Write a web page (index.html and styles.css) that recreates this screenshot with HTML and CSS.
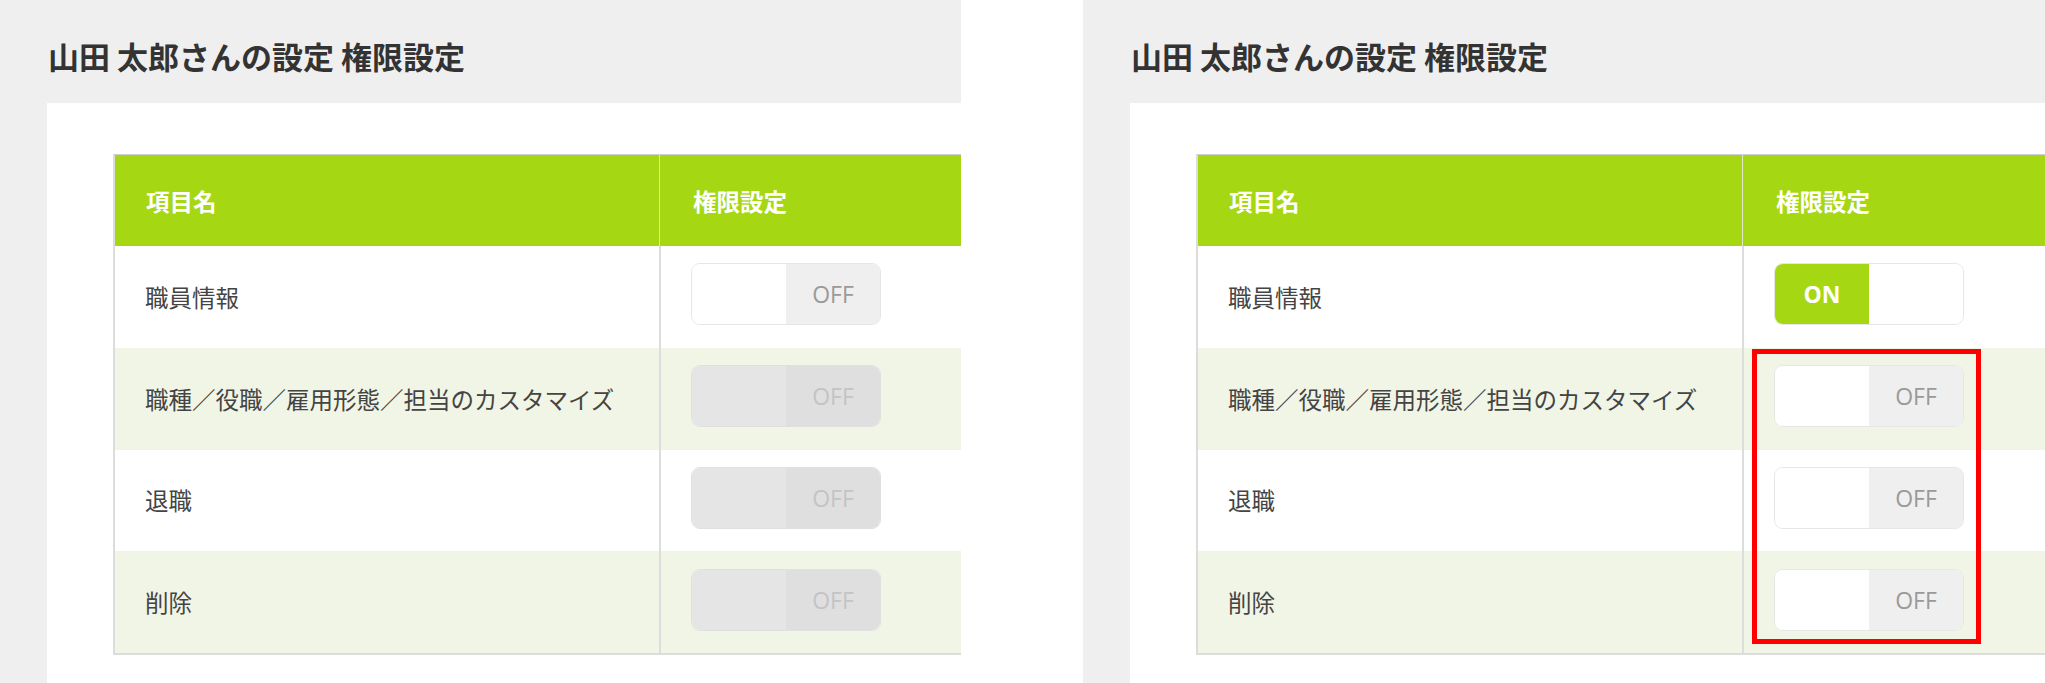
FILE: index.html
```html
<!DOCTYPE html>
<html lang="ja">
<head>
<meta charset="utf-8">
<title>権限設定</title>
<link rel="stylesheet" href="styles.css">
</head>
<body>
<div class="compare">
  <section class="panel">
    <h1 class="title">山田 太郎さんの設定 権限設定</h1>
    <div class="card">
      <div class="table">
        <div class="row head">
          <div class="cell name">項目名</div>
          <div class="cell ctrl">権限設定</div>
        </div>
        <div class="row">
          <div class="cell name">職員情報</div>
          <div class="cell ctrl"><div class="toggle"><span class="half blank"></span><span class="half off">OFF</span></div></div>
        </div>
        <div class="row alt">
          <div class="cell name">職種／役職／雇用形態／担当のカスタマイズ</div>
          <div class="cell ctrl"><div class="toggle disabled"><span class="half blank"></span><span class="half off">OFF</span></div></div>
        </div>
        <div class="row">
          <div class="cell name">退職</div>
          <div class="cell ctrl"><div class="toggle disabled"><span class="half blank"></span><span class="half off">OFF</span></div></div>
        </div>
        <div class="row alt">
          <div class="cell name">削除</div>
          <div class="cell ctrl"><div class="toggle disabled"><span class="half blank"></span><span class="half off">OFF</span></div></div>
        </div>
      </div>
    </div>
  </section>

  <section class="panel panel-right">
    <h1 class="title">山田 太郎さんの設定 権限設定</h1>
    <div class="card">
      <div class="table">
        <div class="row head">
          <div class="cell name">項目名</div>
          <div class="cell ctrl">権限設定</div>
        </div>
        <div class="row">
          <div class="cell name">職員情報</div>
          <div class="cell ctrl"><div class="toggle"><span class="half on">ON</span><span class="half blank"></span></div></div>
        </div>
        <div class="row alt">
          <div class="cell name">職種／役職／雇用形態／担当のカスタマイズ</div>
          <div class="cell ctrl"><div class="toggle"><span class="half blank"></span><span class="half off">OFF</span></div></div>
        </div>
        <div class="row">
          <div class="cell name">退職</div>
          <div class="cell ctrl"><div class="toggle"><span class="half blank"></span><span class="half off">OFF</span></div></div>
        </div>
        <div class="row alt">
          <div class="cell name">削除</div>
          <div class="cell ctrl"><div class="toggle"><span class="half blank"></span><span class="half off">OFF</span></div></div>
        </div>
      </div>
    </div>
    <div class="highlight"></div>
  </section>
</div>
</body>
</html>
```

FILE: styles.css
```css
* { box-sizing: border-box; }

html, body {
  margin: 0;
  padding: 0;
  background: #ffffff;
}

body {
  font-family: "Noto Sans CJK JP", "Noto Sans", sans-serif;
  color: #444444;
}

.compare {
  display: flex;
  gap: 122px;
  width: 2045px;
  height: 683px;
  overflow: hidden;
}

.panel {
  position: relative;
  flex: 0 0 961px;
  height: 683px;
  overflow: hidden;
  background: #efefef;
  padding: 40px 0 0 47px;
}

.panel-right {
  flex-basis: 962px;
}

.title {
  margin: 0 0 32px 1px;
  font-size: 31px;
  line-height: 31px;
  font-weight: 700;
  color: #333333;
  white-space: nowrap;
}

.card {
  background: #ffffff;
  height: 620px;
  padding: 51px 0 0 66px;
}

.table {
  width: 1100px;
  border-left: 2px solid #dcdcdc;
  border-top: 1px solid #cfcfcf;
  border-bottom: 2px solid #dcdcdc;
}

.row {
  display: grid;
  grid-template-columns: 544px 1fr;
  height: 101.75px;
  background: #ffffff;
}

.row.alt {
  background: #f1f5e6;
}

.row.head {
  height: 91px;
  background: #a6d713;
  color: #ffffff;
  font-weight: 700;
}

.cell {
  display: flex;
  align-items: center;
  font-size: 23.5px;
  white-space: nowrap;
}

.cell.name {
  padding-left: 30px;
}

.cell.ctrl {
  border-left: 2px solid #dddddd;
  padding-left: 30px;
  padding-bottom: 5px;
}

.row.head .cell.ctrl {
  border-left: 1px solid #dfe7c8;
  padding-left: 33px;
  padding-bottom: 0;
}

.row.head .cell.name {
  padding-left: 31px;
}

.toggle {
  display: flex;
  width: 190px;
  height: 62px;
  border: 1px solid #e6e6e6;
  border-radius: 9px;
  overflow: hidden;
  background: #ffffff;
}

.half {
  flex: 1 1 0;
  display: flex;
  align-items: center;
  justify-content: center;
  font-family: "Open Sans", "Noto Sans", sans-serif;
  font-size: 23px;
}

.half.blank {
  background: #ffffff;
}

.half.off {
  background: #efefef;
  color: #9a9a9a;
}

.half.on {
  background: #a6d713;
  color: #ffffff;
  font-weight: 700;
}

.toggle.disabled {
  border-color: #e0e0e0;
}

.toggle.disabled .half.blank {
  background: #e5e5e5;
}

.toggle.disabled .half.off {
  background: #dfdfdf;
  color: #c4c4c4;
}

.highlight {
  position: absolute;
  left: 669px;
  top: 349px;
  width: 229px;
  height: 295px;
  border: 5px solid #ff0000;
}
```
